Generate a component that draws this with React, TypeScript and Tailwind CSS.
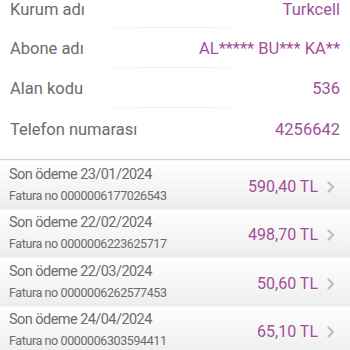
import React from "react";

interface InfoRow {
  label: string;
  value: string;
}

interface Payment {
  date: string;
  invoice: string;
  amount: string;
}

const info: InfoRow[] = [
  { label: "Kurum adı", value: "Turkcell" },
  { label: "Abone adı", value: "AL***** BU*** KA**" },
  { label: "Alan kodu", value: "536" },
  { label: "Telefon numarası", value: "4256642" },
];

const payments: Payment[] = [
  { date: "23/01/2024", invoice: "0000006177026543", amount: "590,40 TL" },
  { date: "22/02/2024", invoice: "0000006223625717", amount: "498,70 TL" },
  { date: "22/03/2024", invoice: "0000006262577453", amount: "50,60 TL" },
  { date: "24/04/2024", invoice: "0000006303594411", amount: "65,10 TL" },
];

// padding/height per info row, first row is scrolled partly off
const rowClasses = [
  "h-[28px] -mt-[2px] pt-0",
  "h-[40px] pt-[11px]",
  "h-[40px] pt-[11px]",
  "h-[51px] pt-[12px]",
];

function Chevron() {
  return (
    <svg width="8" height="12" viewBox="0 0 8 12" className="ml-[9px]">
      <path
        d="M1.5 1.5 L6 6 L1.5 10.5"
        fill="none"
        stroke="#bdbdbd"
        strokeWidth="2.2"
        strokeLinecap="round"
        strokeLinejoin="round"
      />
    </svg>
  );
}

export default function App() {
  return (
    <div
      className="w-[350px] h-[350px] overflow-hidden bg-white"
      style={{ fontFamily: "Roboto, 'Noto Sans', sans-serif" }}
    >
      <div className="pt-[2px]">
        {info.map((row, i) => (
          <div key={row.label} className={`relative ${rowClasses[i]}`}>
            <div className="flex justify-between px-[10px] leading-[20px] text-[16.5px]">
              <span className="text-[#6b6b6b]">{row.label}</span>
              <span className="text-[#a0509b]">{row.value}</span>
            </div>
            {i < 3 && (
              <div className="absolute bottom-0 left-[80px] w-[190px] h-px bg-gradient-to-r from-transparent via-[#ececec] to-transparent" />
            )}
          </div>
        ))}
      </div>
      <div className="h-px bg-[#cfcfcf]" />
      <div>
        {payments.map((p) => (
          <div
            key={p.invoice}
            className="h-[48.5px] flex items-center justify-between pl-[9px] pr-[15px] bg-gradient-to-b from-white to-[#ededed] border-t border-[#f6f6f6]"
          >
            <div className="flex flex-col">
              <span className="text-[14.5px] tracking-[-0.55px] leading-[20px] text-[#6b6b6b]">
                Son ödeme {p.date}
              </span>
              <span className="text-[12.5px] tracking-[-0.4px] leading-[18px] mt-[2px] text-[#6b6b6b]">
                Fatura no {p.invoice}
              </span>
            </div>
            <div className="flex items-center pt-[4px]">
              <span className="text-[16px] text-[#a0509b]">{p.amount}</span>
              <Chevron />
            </div>
          </div>
        ))}
      </div>
    </div>
  );
}
